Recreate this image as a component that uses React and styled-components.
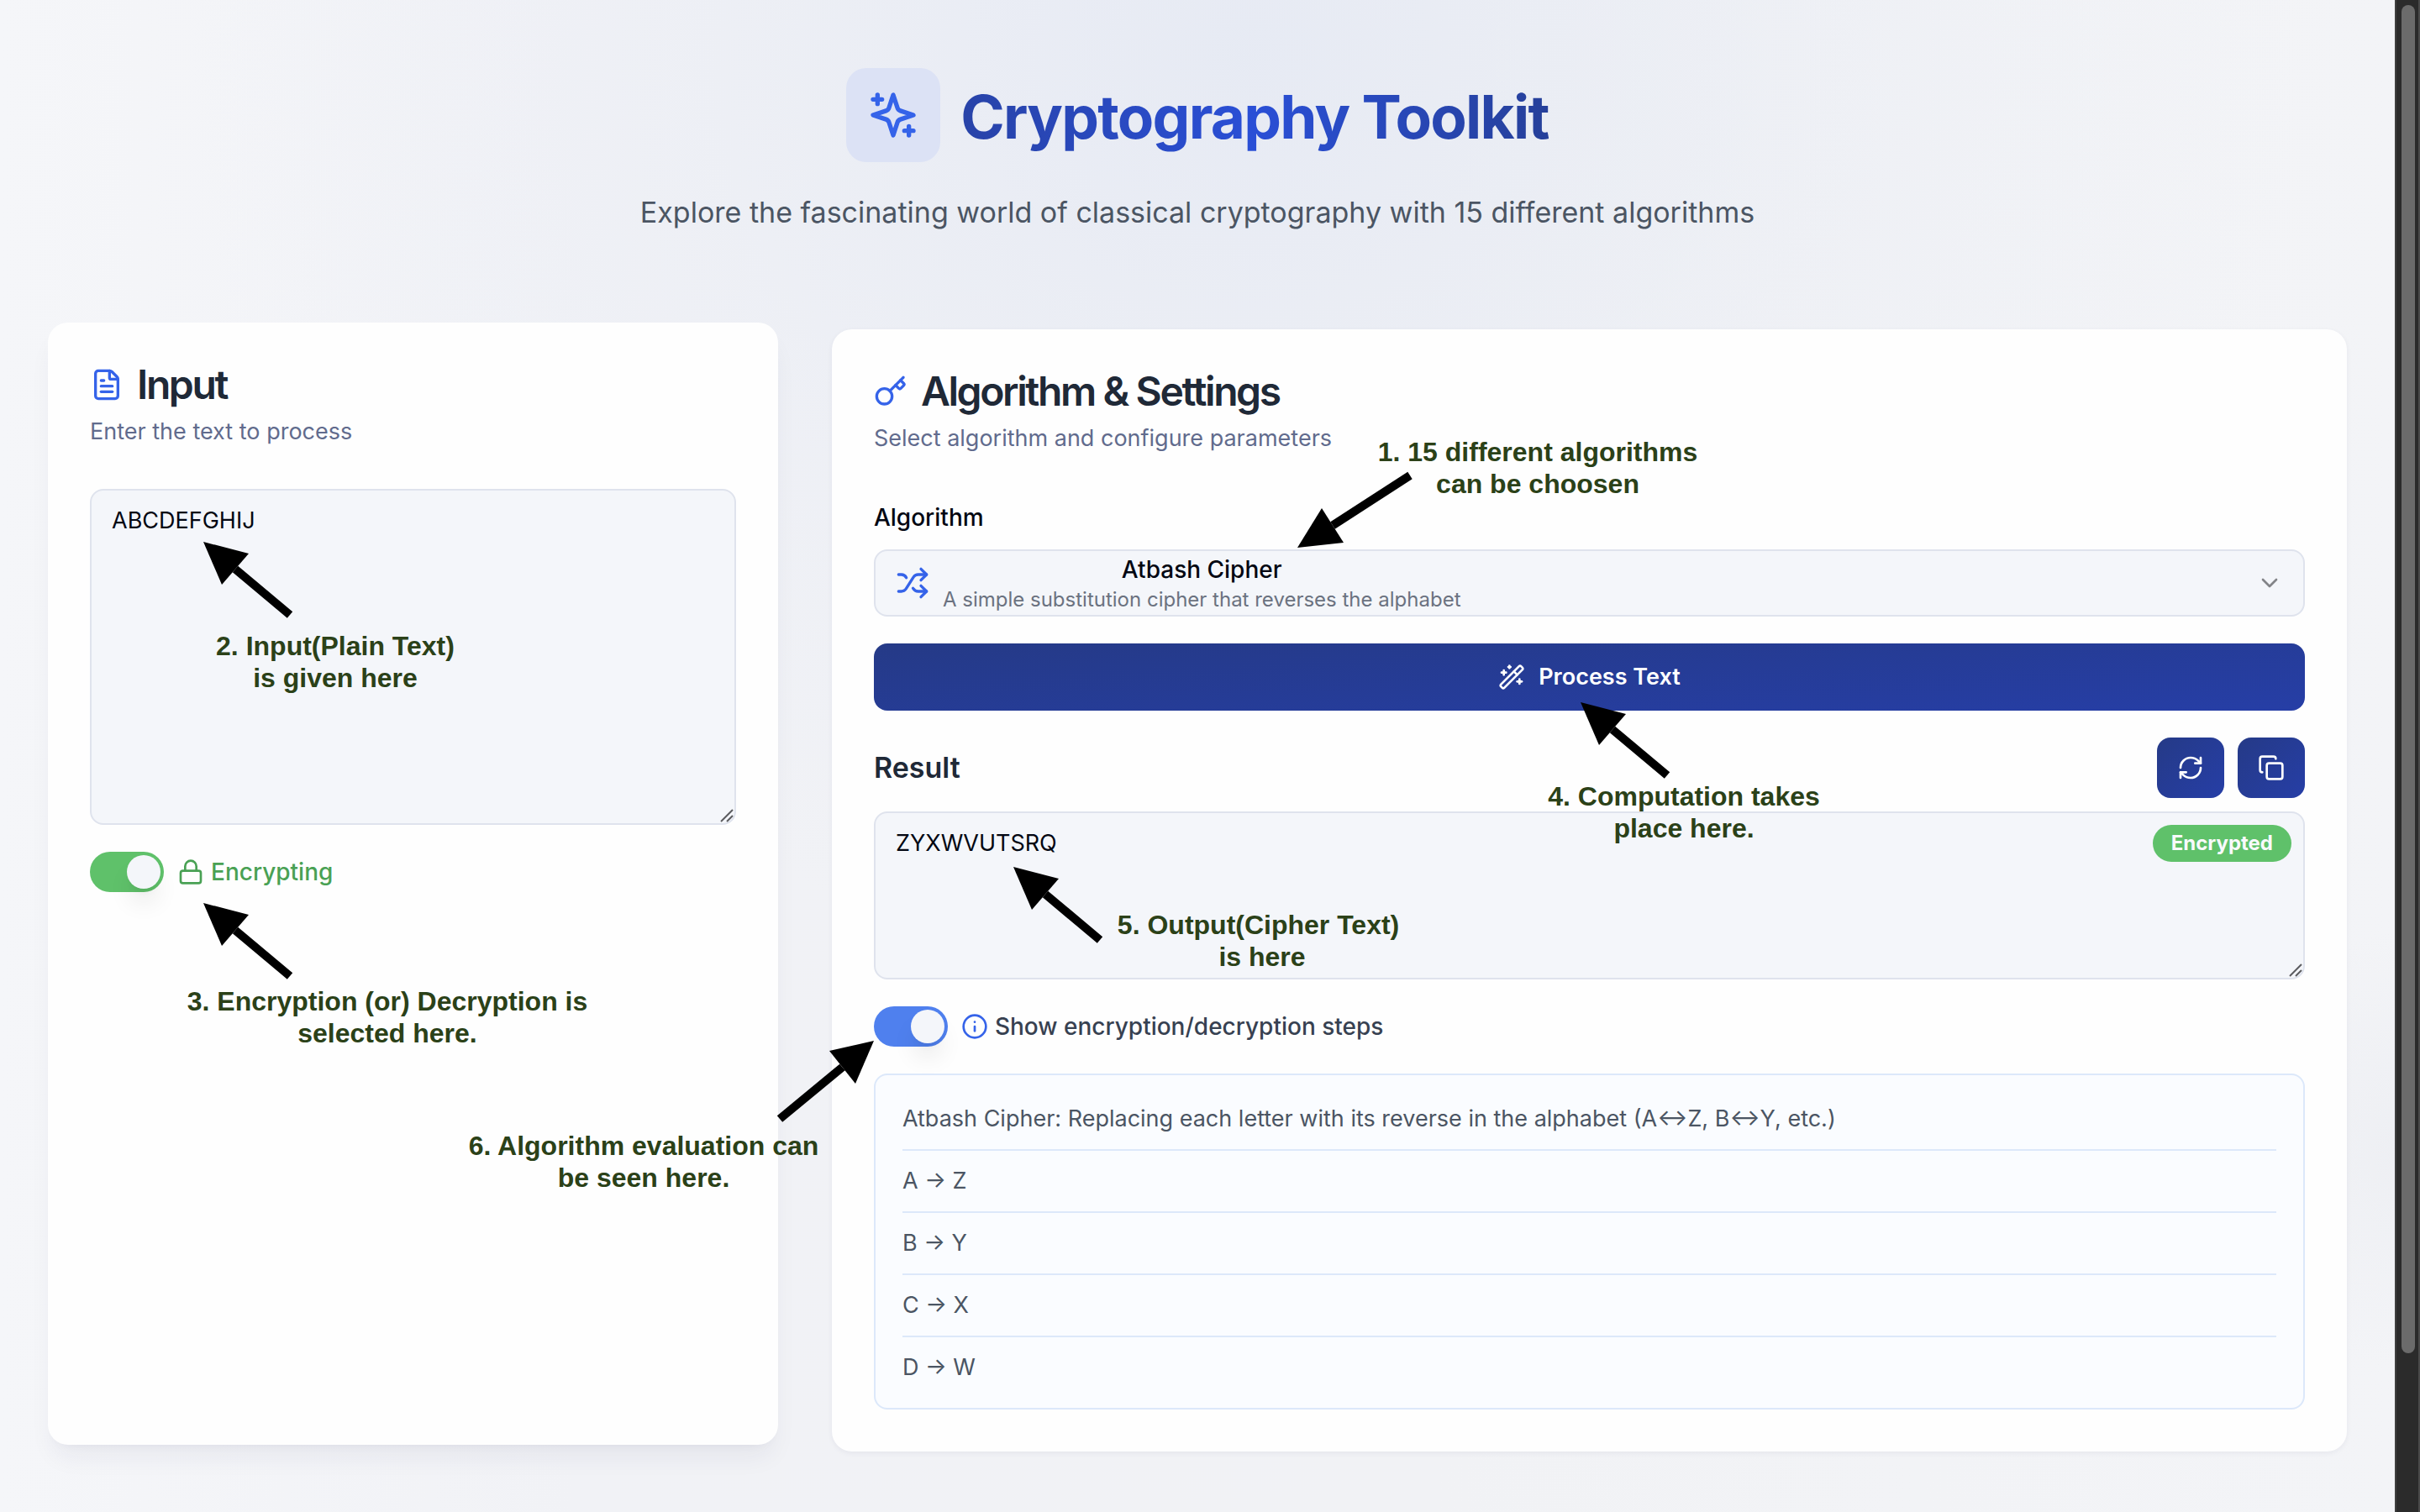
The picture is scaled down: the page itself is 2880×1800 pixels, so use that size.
import React, { useState } from "react";
import styled, { createGlobalStyle } from "styled-components";
import { FileText, Key, Shuffle, ChevronDown, WandSparkles, RefreshCw, Copy, Info } from "lucide-react";

const GlobalStyle = createGlobalStyle`
  *, *::before, *::after { box-sizing: border-box; }
  body {
    margin: 0;
    font-family: Inter, "Liberation Sans", sans-serif;
    font-size: 27px;
    line-height: 40px;
    color: #030712;
  }
  h1, h2, h3, p, ul { margin: 0; padding: 0; }
  button, textarea, select, input { font: inherit; color: inherit; }
`;

const Window = styled.div`
  display: flex;
  height: 100vh;
  overflow: hidden;
`;

const Page = styled.main`
  position: relative;
  flex: 1;
  min-width: 0;
  padding: 81px 57px 72px;
  background:
    radial-gradient(ellipse 180px 260px at 100% 76%, rgba(230, 232, 238, 0.4), transparent),
    radial-gradient(ellipse 44% 60% at 52% 4%, rgba(226, 231, 243, 0.7), rgba(230, 234, 244, 0.3) 55%, transparent),
    linear-gradient(90deg, #f5f6f9, #f1f2f6 24%, #f1f2f5 60%, #f3f4f7);
`;

const ScrollTrack = styled.div`
  flex: none;
  width: 30px;
  padding: 6px 4px 0 6px;
  background: #2b2b2b;
  border-left: 2px solid #3f3f3f;
  border-right: 2px solid #4a4a4a;
`;

const ScrollThumb = styled.div`
  height: 1605px;
  width: 16px;
  border-radius: 8px;
  background: #6b6b6b;
`;

const Header = styled.header`
  display: flex;
  flex-direction: column;
  align-items: center;
  gap: 32px;
  margin-bottom: 111px;
`;

const Brand = styled.div`
  display: flex;
  align-items: center;
  gap: 24px;
`;

const BrandTile = styled.div`
  display: flex;
  padding: 24px;
  border-radius: 24px;
  background: #dce2f5;
  color: #3563e9;
`;

const Title = styled.h1`
  padding-top: 4px;
  font-size: 71px;
  line-height: 96px;
  font-weight: 700;
  letter-spacing: -0.025em;
  color: transparent;
  background: linear-gradient(90deg, #2843a8, #2a4fd6 50%, #26409a);
  background-clip: text;
`;

const Tagline = styled.p`
  font-size: 34px;
  line-height: 56px;
  color: #4b5563;
`;

const Columns = styled.div`
  display: grid;
  grid-template-columns: 40fr 83fr;
  gap: 64px;
`;

const Card = styled.section`
  padding: 50px;
  border-radius: 24px;
  background: #fefefe;
  transform: ${(p) => (p.$lifted ? "translateY(-8px)" : "none")};
  box-shadow: ${(p) =>
    p.$lifted
      ? "0 20px 30px -6px rgba(30, 41, 80, 0.06), 0 8px 12px -8px rgba(30, 41, 80, 0.05)"
      : "0 2px 6px rgba(30, 41, 80, 0.06)"};
`;

const CardHeader = styled.div`
  display: flex;
  flex-direction: column;
  gap: 12px;
  margin-bottom: 48px;
`;

const CardTitle = styled.h2`
  display: flex;
  align-items: center;
  gap: 16px;
  font-size: 48px;
  line-height: 48px;
  font-weight: 600;
  letter-spacing: -0.05em;
  color: #1f2937;

  svg { color: #3563e9; }
`;

const CardHint = styled.p`
  color: #616b8d;
`;

const Stack = styled.div`
  display: flex;
  flex-direction: column;
  gap: ${(p) => p.$gap}px;
`;

const TextArea = styled.textarea`
  display: block;
  width: 100%;
  height: ${(p) => p.$height}px;
  padding: 16px 24px;
  border: 2px solid #dfe3ed;
  border-radius: 16px;
  background: #f4f6fa;
  outline: none;
  resize: none;
`;

const GripFrame = styled.div`
  position: relative;

  > svg {
    position: absolute;
    right: 3px;
    bottom: 3px;
    pointer-events: none;
  }
`;

const ToggleRow = styled.div`
  display: flex;
  align-items: center;
  gap: 16px;
`;

const Switch = styled.input`
  appearance: none;
  flex: none;
  display: flex;
  justify-content: flex-end;
  width: 88px;
  height: 48px;
  margin: 0;
  padding: 4px;
  border-radius: 24px;
  background: ${(p) => p.$color};

  &:not(:checked) {
    justify-content: flex-start;
    background: #dfe3ed;
  }

  &::before {
    content: "";
    width: 40px;
    height: 40px;
    border-radius: 20px;
    background: #f4f6fa;
    box-shadow: 0 20px 30px -6px rgba(0, 0, 0, 0.12), 0 8px 12px -8px rgba(0, 0, 0, 0.1);
  }
`;

const ToggleLabel = styled.label`
  display: flex;
  align-items: center;
  gap: 8px;
  font-size: 28px;
  font-weight: 500;
  color: ${(p) => p.$color};

  svg { color: ${(p) => p.$iconColor || p.$color}; }
`;

const FieldLabel = styled.label`
  font-size: 28px;
  line-height: 52px;
  font-weight: 500;
`;

const Picker = styled.div`
  display: grid;
  height: 80px;
  border: 2px solid #dfe3ed;
  border-radius: 16px;
  background: #f4f6fa;

  > * { grid-area: 1 / 1; }
`;

const PickerSelect = styled.select`
  width: 100%;
  height: 100%;
  opacity: 0;
`;

const PickerFace = styled.div`
  display: flex;
  align-items: center;
  gap: 16px;
  padding: 0 24px;
  pointer-events: none;

  > svg:first-child { color: #3563e9; }
  > svg:last-child { margin-left: auto; color: #838488; }
`;

const PickerText = styled.div`
  text-align: center;
`;

const PickerName = styled.div`
  font-size: 28px;
  font-weight: 500;
`;

const PickerNote = styled.div`
  font-size: 24px;
  line-height: 32px;
  color: #6b7280;
`;

const Button = styled.button`
  display: flex;
  align-items: center;
  justify-content: center;
  gap: 16px;
  width: ${(p) => (p.$icon ? "80px" : "100%")};
  height: ${(p) => (p.$icon ? "72px" : "80px")};
  padding: 0;
  border: 0;
  border-radius: 16px;
  background: linear-gradient(${(p) => (p.$icon ? "135deg" : "176deg")}, #253a87, #263ea6);
  color: #ffffff;
  font-weight: 600;
`;

const ResultBar = styled.div`
  display: flex;
  align-items: center;
  gap: 16px;
`;

const ResultTitle = styled.h3`
  flex: 1;
  font-size: 34px;
  line-height: 56px;
  font-weight: 600;
  color: #1f2937;
`;

const Badge = styled.span`
  position: absolute;
  top: 16px;
  right: 16px;
  padding: 6px 22px;
  border-radius: 22px;
  background: #5fc16a;
  color: #f8fafc;
  font-size: 24px;
  line-height: 32px;
  font-weight: 700;
`;

const Steps = styled.ul`
  padding: 16px 32px 12px;
  list-style: none;
  border: 2px solid #dce8fa;
  border-radius: 16px;
  background: #fafcff;
`;

const Step = styled.li`
  padding: 16px 0;
  color: #4b5563;

  & + & { border-top: 2px solid #dce8fa; }
`;

const Note = styled.p`
  position: absolute;
  z-index: 2;
  transform: translateX(-50%);
  white-space: pre;
  text-align: center;
  font-family: "Liberation Sans", Arial, sans-serif;
  font-size: 32px;
  line-height: 38px;
  font-weight: 700;
  color: #2b4118;
  pointer-events: none;
`;

const ArrowLayer = styled.svg`
  position: absolute;
  z-index: 2;
  inset: 0;
  width: 100%;
  height: 100%;
  pointer-events: none;
`;

const notes = [
  { x: 1830, y: 519, text: "1. 15 different algorithms\ncan be choosen" },
  { x: 399, y: 750, text: "2. Input(Plain Text)\nis given here" },
  { x: 461, y: 1173, text: "3. Encryption (or) Decryption is\nselected here." },
  { x: 2004, y: 929, text: "4. Computation takes\nplace here." },
  { x: 1502, y: 1082, text: "5. Output(Cipher Text) \nis here" },
  { x: 766, y: 1345, text: "6. Algorithm evaluation can\nbe seen here." },
];

const arrows = [
  { tip: [1544, 652], head: [[1573, 605], [1599, 646]], end: [1678, 566] },
  { tip: [242, 645], head: [[296, 659], [264, 696]], end: [345, 732] },
  { tip: [242, 1075], head: [[296, 1089], [264, 1126]], end: [345, 1162] },
  { tip: [1881, 836], head: [[1935, 850], [1903, 887]], end: [1984, 923] },
  { tip: [1206, 1032], head: [[1260, 1046], [1228, 1083]], end: [1309, 1119] },
  { tip: [1040, 1239], head: [[987, 1251], [1018, 1290]], end: [928, 1332] },
];

const steps = [
  "Atbash Cipher: Replacing each letter with its reverse in the alphabet (A↔Z, B↔Y, etc.)",
  "A → Z",
  "B → Y",
  "C → X",
  "D → W",
];

function Arrow({ tip, head, end }) {
  const baseX = (head[0][0] + head[1][0]) / 2;
  const baseY = (head[0][1] + head[1][1]) / 2;
  return (
    <g>
      <line x1={baseX} y1={baseY} x2={end[0]} y2={end[1]} stroke="#000" strokeWidth="10" />
      <polygon points={[tip, ...head].map((p) => p.join(",")).join(" ")} />
    </g>
  );
}

function SparklesIcon() {
  return (
    <svg width="64" height="64" viewBox="0 0 24 24" fill="none" stroke="currentColor" strokeWidth="2" strokeLinecap="round" strokeLinejoin="round">
      <path d="m12 3-1.912 5.813a2 2 0 0 1-1.275 1.275L3 12l5.813 1.912a2 2 0 0 1 1.275 1.275L12 21l1.912-5.813a2 2 0 0 1 1.275-1.275L21 12l-5.813-1.912a2 2 0 0 1-1.275-1.275L12 3Z" />
      <path d="M5 3v4M19 17v4M3 5h4M17 19h4" />
    </svg>
  );
}

function LockIcon() {
  return (
    <svg width="32" height="32" viewBox="0 0 24 24" fill="none" stroke="currentColor" strokeWidth="2" strokeLinecap="round" strokeLinejoin="round">
      <rect width="18" height="11" x="3" y="11" rx="2" />
      <path d="M7 11V7a5 5 0 0 1 10 0v4" />
    </svg>
  );
}

function Grip() {
  return (
    <svg width="16" height="16" viewBox="0 0 16 16" stroke="#5c5d60" strokeWidth="2">
      <path d="M1 15 15 1M8 15l7-7" />
    </svg>
  );
}

export default function App() {
  const [text, setText] = useState("ABCDEFGHIJ");
  return (
    <Window>
      <GlobalStyle />
      <Page>
        <Header>
          <Brand>
            <BrandTile><SparklesIcon /></BrandTile>
            <Title>Cryptography Toolkit</Title>
          </Brand>
          <Tagline>Explore the fascinating world of classical cryptography with 15 different algorithms</Tagline>
        </Header>

        <Columns>
          <Card $lifted>
            <CardHeader>
              <CardTitle><FileText size={40} />Input</CardTitle>
              <CardHint id="input-hint">Enter the text to process</CardHint>
            </CardHeader>
            <Stack $gap={32}>
              <GripFrame>
                <TextArea $height={400} aria-labelledby="input-hint" spellCheck={false} value={text} onChange={(e) => setText(e.target.value)} />
                <Grip />
              </GripFrame>
              <ToggleRow>
                <Switch id="mode" type="checkbox" role="switch" defaultChecked $color="#5fc16a" />
                <ToggleLabel htmlFor="mode" $color="#49a154"><LockIcon />Encrypting</ToggleLabel>
              </ToggleRow>
            </Stack>
          </Card>

          <Card>
            <CardHeader>
              <CardTitle><Key size={40} />Algorithm &amp; Settings</CardTitle>
              <CardHint>Select algorithm and configure parameters</CardHint>
            </CardHeader>
            <Stack $gap={32}>
              <Stack $gap={12}>
                <FieldLabel htmlFor="algorithm">Algorithm</FieldLabel>
                <Picker>
                  <PickerSelect id="algorithm" defaultValue="atbash">
                    <option value="atbash">Atbash Cipher</option>
                  </PickerSelect>
                  <PickerFace aria-hidden="true">
                    <Shuffle size={40} />
                    <PickerText>
                      <PickerName>Atbash Cipher</PickerName>
                      <PickerNote>A simple substitution cipher that reverses the alphabet</PickerNote>
                    </PickerText>
                    <ChevronDown size={32} />
                  </PickerFace>
                </Picker>
              </Stack>
              <Button type="button"><WandSparkles size={32} />Process Text</Button>
              <Stack $gap={16}>
                <ResultBar>
                  <ResultTitle id="result-title">Result</ResultTitle>
                  <Button $icon type="button" aria-label="Refresh"><RefreshCw size={32} /></Button>
                  <Button $icon type="button" aria-label="Copy"><Copy size={32} /></Button>
                </ResultBar>
                <GripFrame>
                  <TextArea $height={200} readOnly aria-labelledby="result-title" spellCheck={false} value="ZYXWVUTSRQ" />
                  <Grip />
                  <Badge>Encrypted</Badge>
                </GripFrame>
              </Stack>
              <ToggleRow>
                <Switch id="show-steps" type="checkbox" role="switch" defaultChecked $color="#4f80ee" />
                <ToggleLabel htmlFor="show-steps" $color="#374151" $iconColor="#3563e9">
                  <Info size={32} />Show encryption/decryption steps
                </ToggleLabel>
              </ToggleRow>
              <Steps>
                {steps.map((s) => <Step key={s}>{s}</Step>)}
              </Steps>
            </Stack>
          </Card>
        </Columns>

        <ArrowLayer aria-hidden="true">
          {arrows.map((a) => <Arrow key={a.tip.join()} {...a} />)}
        </ArrowLayer>
        {notes.map((n) => (
          <Note key={n.text} style={{ left: n.x, top: n.y }}>{n.text}</Note>
        ))}
      </Page>
      <ScrollTrack><ScrollThumb /></ScrollTrack>
    </Window>
  );
}
